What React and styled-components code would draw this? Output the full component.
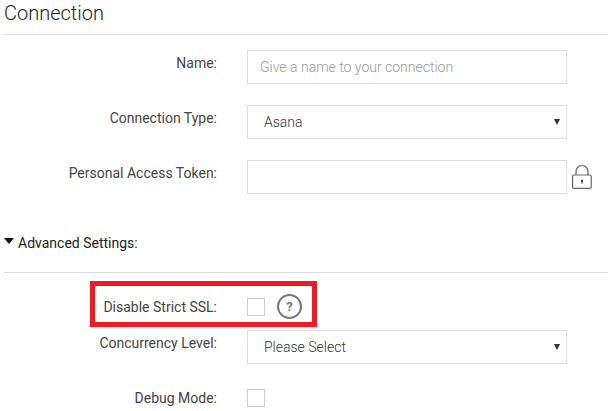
import React from "react";
import styled, { createGlobalStyle } from "styled-components";

const GlobalStyle = createGlobalStyle`
  html, body {
    margin: 0;
    padding: 0;
    background: #fff;
    font-family: Roboto, "Liberation Sans", sans-serif;
    overflow: hidden;
  }
`;

const Page = styled.div`
  position: relative;
  width: 608px;
  height: 411px;
  padding-left: 4px;
  box-sizing: border-box;
  overflow: hidden;
`;

const Title = styled.h2`
  margin: 0;
  height: 34px;
  box-sizing: border-box;
  padding-top: 1px;
  font-size: 20px;
  line-height: 24px;
  font-weight: 300;
  color: #222;
`;

const Divider = styled.div`
  height: 1px;
  background: #ddd;
`;

const Form = styled.div`
  display: flex;
  flex-direction: column;
  padding-top: ${(p) => p.$top}px;
`;

const Row = styled.div`
  display: flex;
  align-items: ${(p) => (p.$center ? "center" : "flex-start")};
  gap: 30px;
  margin-bottom: ${(p) => p.$gap ?? 21}px;
`;

const Label = styled.label`
  width: 213px;
  flex: none;
  text-align: right;
  font-size: 14px;
  line-height: 18px;
  color: #444;
  padding-top: ${(p) => (p.$center ? 0 : 4)}px;
`;

const TextInput = styled.input`
  width: 320px;
  height: 34px;
  box-sizing: border-box;
  border: 1px solid #ddd;
  border-radius: 0;
  outline: none;
  padding: 0 12px;
  font-family: inherit;
  font-size: 14px;
  font-weight: 300;
  color: #444;

  &::placeholder {
    color: #999;
    opacity: 1;
  }
`;

const SelectWrap = styled.div`
  position: relative;
  width: 320px;
  height: 34px;

  &::after {
    content: "";
    position: absolute;
    right: 7px;
    top: 14px;
    border-left: 3px solid transparent;
    border-right: 3px solid transparent;
    border-top: 6px solid #333;
    pointer-events: none;
  }
`;

const Select = styled.select`
  appearance: none;
  width: 100%;
  height: 100%;
  box-sizing: border-box;
  border: 1px solid #ddd;
  border-radius: 0;
  background: #fff;
  outline: none;
  padding: 0 16px;
  font-family: inherit;
  font-size: 14px;
  font-weight: 300;
  color: #333;
`;

const LockIcon = styled.svg`
  flex: none;
  width: 21px;
  height: 26px;
  margin: 4px 0 0 -26px;
`;

const Checkbox = styled.input.attrs({ type: "checkbox" })`
  appearance: none;
  flex: none;
  width: 18px;
  height: 18px;
  margin: 0;
  box-sizing: border-box;
  border: 1px solid #ccc;
  background: #fff;
`;

const HelpIcon = styled.span`
  flex: none;
  width: 25px;
  height: 25px;
  margin-left: -18px;
  box-sizing: border-box;
  border: 2px solid #777;
  border-radius: 50%;
  display: flex;
  align-items: center;
  justify-content: center;
  font-size: 13px;
  font-weight: 700;
  color: #777;
`;

const SectionToggle = styled.div`
  display: flex;
  align-items: center;
  gap: 4px;
  height: 78px;
  box-sizing: border-box;
  padding-top: 20px;
  font-size: 14px;
  line-height: 18px;
  color: #222;
`;

const Caret = styled.span`
  flex: none;
  margin-top: -4px;
  border-left: 5.5px solid transparent;
  border-right: 5.5px solid transparent;
  border-top: 6px solid #111;
`;

// annotation drawn over the screenshot
const Highlight = styled.div`
  position: absolute;
  left: 90px;
  top: 281px;
  width: 227px;
  height: 46px;
  box-sizing: border-box;
  border: 5px solid #ed1c24;
  pointer-events: none;
`;

export default function App() {
  return (
    <Page>
      <GlobalStyle />
      <Title>Connection</Title>
      <Divider />
      <Form $top={15}>
        <Row>
          <Label>Name:</Label>
          <TextInput placeholder="Give a name to your connection" />
        </Row>
        <Row>
          <Label>Connection Type:</Label>
          <SelectWrap>
            <Select defaultValue="asana">
              <option value="asana">Asana</option>
            </Select>
          </SelectWrap>
        </Row>
        <Row $gap={0}>
          <Label>Personal Access Token:</Label>
          <TextInput />
          <LockIcon viewBox="0 0 21 26" fill="none">
            <path d="M5 11V7.5a6 6 0 0 1 12 0V11" stroke="#666" strokeWidth="1.2" />
            <rect x="1.6" y="11" width="18.6" height="13.4" rx="1.2" stroke="#666" strokeWidth="1.2" />
            <circle cx="11" cy="17" r="1.2" fill="#444" />
            <path d="M11 17.4v2.2" stroke="#444" strokeWidth="1" />
          </LockIcon>
        </Row>
      </Form>
      <SectionToggle>
        <Caret />
        Advanced Settings:
      </SectionToggle>
      <Divider />
      <Form $top={21}>
        <Row $center $gap={11}>
          <Label $center>Disable Strict SSL:</Label>
          <Checkbox />
          <HelpIcon>?</HelpIcon>
        </Row>
        <Row $gap={25}>
          <Label>Concurrency Level:</Label>
          <SelectWrap>
            <Select defaultValue="">
              <option value="">Please Select</option>
            </Select>
          </SelectWrap>
        </Row>
        <Row $center $gap={0}>
          <Label $center>Debug Mode:</Label>
          <Checkbox />
        </Row>
      </Form>
      <Highlight />
    </Page>
  );
}
